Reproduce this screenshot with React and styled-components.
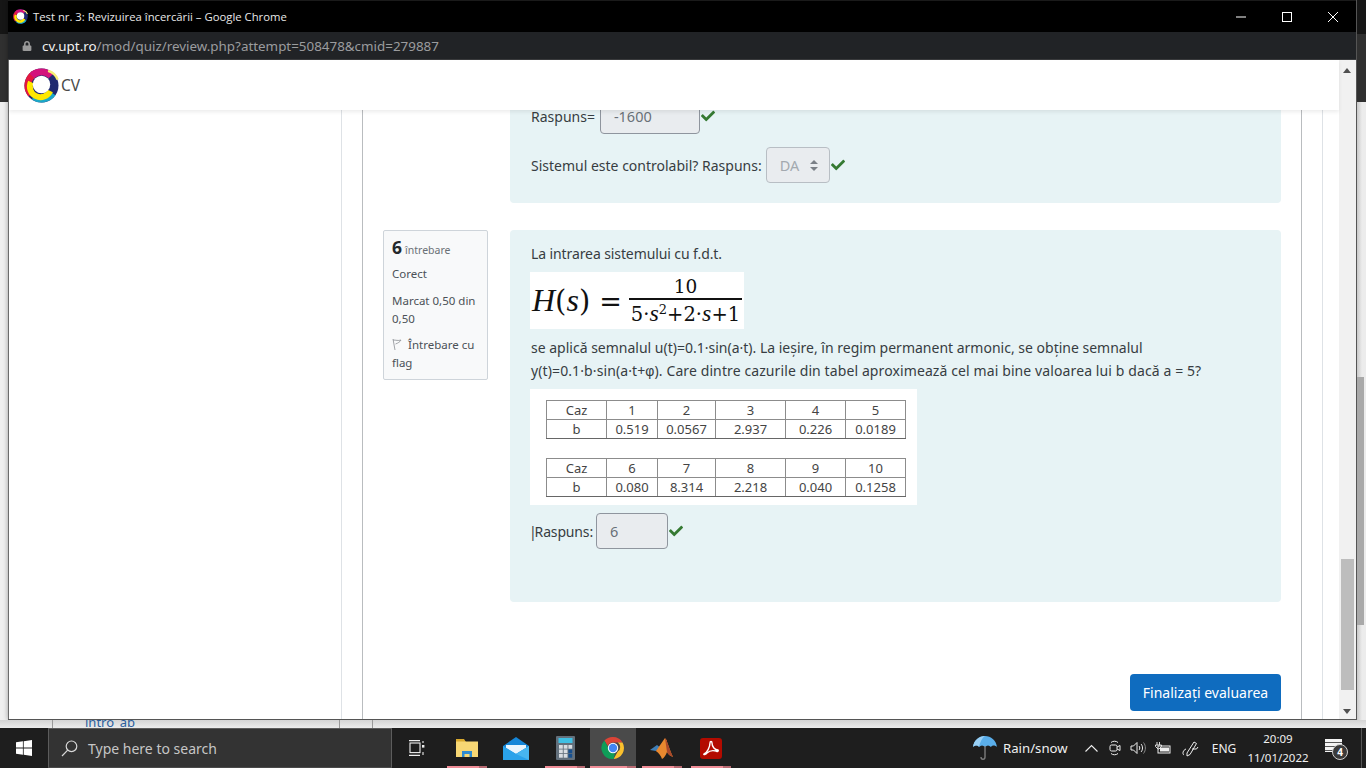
import React from 'react'
import styled, { createGlobalStyle } from 'styled-components'
import { FaCheck, FaLock } from 'react-icons/fa'

const uiFont = '"Noto Sans", "Open Sans", sans-serif'

const GlobalStyle = createGlobalStyle`
  html, body { margin: 0; padding: 0; overflow: hidden; background: #1f1f1f; }
  * { box-sizing: border-box; }
  body { font-family: ${uiFont}; }
`

const Screen = styled.div`
  width: 1366px;
  height: 768px;
  display: grid;
  grid-template-rows: 728px 40px;
  overflow: hidden;
`

const Desk = styled.div`
  display: grid;
  grid-template-columns: 8px 1349px 9px;
  grid-template-rows: 720px 8px;
  background: #ececec;
`

const Gutter = styled.div`
  display: grid;
  grid-template-rows: 34px 68px 1fr;
  background: #efefef;
  &::before { content: ''; background: #161616; }
  &::after { content: ''; background: #303030; grid-row: 2; }
`

const RightGutter = styled(Gutter)`
  position: relative;
  background: linear-gradient(90deg, #c9c9c9, #ececec 5px);
`

const BehindThumb = styled.div`
  position: absolute;
  left: 0;
  top: 377px;
  width: 7px;
  height: 248px;
  background: #a9a9a9;
`

const BehindStrip = styled.div`
  grid-column: 1 / 4;
  display: flex;
  height: 8px;
  overflow: hidden;
  padding-left: 52px;
  background: linear-gradient(180deg, #d4d4d4, #ececec);
`

const BehindPane = styled.div`
  flex: 0 0 ${p => p.$w}px;
  border-left: 1px solid #9a9a9a;
  padding-left: 32px;
  font-size: 13px;
  line-height: 4px;
  color: #2c5f9e;
`

const BehindEdge = styled.div`
  flex: 0 0 1px;
  background: #9a9a9a;
`

const ChromeWindow = styled.div`
  display: flex;
  flex-direction: column;
  height: 720px;
  overflow: hidden;
  background: #000;
  border-bottom: 1px solid #555;
  border-right: 1px solid #555;
  box-shadow: 0 0 5px rgba(0, 0, 0, 0.35);
`

const TitleBar = styled.div`
  display: flex;
  align-items: center;
  flex: 0 0 32px;
  border-top: 1px solid #1a1a1a;
  padding-left: 5px;
  background: #000;
  color: #e8e8e8;
  font-family: "Open Sans", sans-serif;
  font-size: 11.3px;
`

const TitleText = styled.span`
  margin-left: 5px;
  flex: 1;
`

const WinButton = styled.div`
  width: 46px;
  height: 30px;
  display: flex;
  align-items: center;
  justify-content: center;
  color: #fff;
`

const UrlBar = styled.div`
  display: flex;
  align-items: center;
  flex: 0 0 28px;
  padding-left: 14px;
  gap: 10px;
  background: #212326;
  color: #9b9c9e;
  font-size: 13.4px;
  border-bottom: 1px solid #3a3b3d;
`

const UrlHost = styled.span`
  color: #f2f2f2;
`

const Viewport = styled.div`
  position: relative;
  flex: 1;
  min-height: 0;
  display: grid;
  grid-template-columns: 1fr 17px;
  background: #fff;
  border-left: 1px solid #6b6b6b;
`

const SiteHeader = styled.header`
  position: absolute;
  z-index: 2;
  top: 0;
  left: 0;
  right: 17px;
  height: 50px;
  display: flex;
  align-items: center;
  gap: 2px;
  padding-left: 15px;
  background: #fff;
  box-shadow: 0 2px 4px rgba(0, 0, 0, 0.08);
  color: #4a4a4a;
  font-size: 15.5px;
`

const PageColumns = styled.div`
  display: grid;
  grid-template-columns: 333px 940px 1fr;
  column-gap: 20px;
  overflow: hidden;
`

const SideDrawer = styled.div`
  border-right: 1px solid #dee2e6;
`

const Region = styled.main`
  border-left: 1px solid #b9bcbf;
  border-right: 1px solid #b9bcbf;
  padding: 0 20px;
  display: flex;
  flex-direction: column;
`

const RightLine = styled.div`
  border-left: 1px solid #dee2e6;
`

const Question = styled.section`
  display: flex;
  gap: 22px;
  padding-left: ${p => (p.$noInfo ? '127px' : '0')};
  margin-bottom: 27px;
`

const InfoBox = styled.div`
  flex: 0 0 105px;
  align-self: flex-start;
  height: 150px;
  padding: 7px 8px 5px;
  background: #f8f9fa;
  border: 1px solid #ced4da;
  border-radius: 2px;
  color: #4b5157;
  font-size: 11.5px;
  line-height: 18px;
`

const QNo = styled.div`
  height: 25px;
  display: flex;
  align-items: baseline;
  gap: 3px;
  color: #6a7076;
  font-size: 10.5px;
  b {
    color: #23282c;
    font-size: 17.5px;
    font-weight: 700;
  }
`

const InfoLine = styled.div`
  margin-top: ${p => p.$top || 0}px;
`

const FlagSvg = styled.svg`
  width: 10px;
  height: 11px;
  margin-right: 3px;
  vertical-align: -1px;
`

const AnswerCard = styled.div`
  flex: 1;
  min-width: 0;
  height: ${p => p.$h}px;
  padding: ${p => p.$top}px 21px 0;
  background: #e7f3f5;
  border-radius: 4px;
  color: #373d42;
  font-size: 14px;
  line-height: 23px;
`

const Line = styled.div`
  display: flex;
  align-items: center;
  gap: ${p => p.$gap || 4}px;
  margin-top: ${p => p.$top || 0}px;
`

const Intro = styled.div`
  letter-spacing: -0.1px;
`

const WideLine = styled.span`
  letter-spacing: 0.105px;
`

const Phi = styled.span`
  font-family: "Liberation Sans", sans-serif;
`

const Caret = styled.span`
  margin: 0 -2px 0 -2px;
`

const TightLabel = styled.span`
  letter-spacing: -0.15px;
`

const Field = styled.div`
  display: flex;
  align-items: center;
  width: ${p => p.$w}px;
  height: 36px;
  padding-left: 13px;
  background: #e9ecef;
  border: 1px solid #8f959e;
  border-radius: 4px;
  color: #6a7178;
  font-size: 14.5px;
`

const SelectField = styled(Field)`
  border-color: #b8bec4;
  color: #a3a9af;
  justify-content: space-between;
  padding-right: 11px;
`

const Check = styled(FaCheck)`
  width: 14px;
  height: 14px;
  margin-left: ${p => p.$pull || -3}px;
  color: #357a32;
`

const Formula = styled.div`
  display: flex;
  align-items: center;
  width: 214px;
  height: 57px;
  margin: 7px 0 7px -1px;
  padding-left: 2px;
  background: #fff;
  color: #111;
  font-family: "DejaVu Serif", serif;
`

const FormulaLhs = styled.span`
  font-size: 29px;
  white-space: nowrap;
  width: 97px;
  i { font-family: "Liberation Serif", serif; font-size: 32px; }
`

const Equals = styled.span`
  margin-left: 9px;
  font-size: 27px;
`

const Fraction = styled.div`
  display: flex;
  flex-direction: column;
  width: 113px;
  font-size: 19.5px;
  line-height: 27px;
  text-align: center;
  white-space: nowrap;
  i { font-family: "Liberation Serif", serif; font-size: 24px; }
  sup { font-size: 13px; line-height: 0; }
`

const Numerator = styled.div`
  border-bottom: 2px solid #111;
  height: 27px;
  font-size: 18.5px;
`

const TableImage = styled.div`
  display: flex;
  flex-direction: column;
  gap: 19px;
  width: 387px;
  height: 116px;
  margin: 6px 0 8px -1px;
  padding: 11px 12px 0 16px;
  background: #fff;
`

const CaseTable = styled.table`
  width: 359px;
  table-layout: fixed;
  border-collapse: collapse;
  color: #444;
  font-size: 13px;
  td {
    height: 19px;
    padding: 0;
    text-align: center;
    line-height: 17px;
    border: 1px solid #8c8c8c;
  }
  tr + tr td {
    border-bottom-color: #666;
  }
`

const SubmitRow = styled.div`
  display: flex;
  justify-content: flex-end;
  margin-top: 45px;
`

const SubmitButton = styled.button`
  width: 151px;
  height: 37px;
  padding: 0;
  border: 0;
  border-radius: 4px;
  background: #0f6cbf;
  color: #fff;
  font-family: inherit;
  font-size: 14px;
`

const ScrollBar = styled.div`
  position: relative;
  background: #f1f1f1;
`

const ScrollThumb = styled.div`
  position: absolute;
  left: 2px;
  right: 2px;
  top: 499px;
  height: 131px;
  background: #bdbdbd;
`

const ScrollArrow = styled.div`
  position: absolute;
  left: 4px;
  top: ${p => p.$top}px;
  width: 0;
  height: 0;
  border-left: 4px solid transparent;
  border-right: 4px solid transparent;
  ${p => (p.$up ? 'border-bottom: 5px solid #505050;' : 'border-top: 5px solid #505050;')}
`

const TaskBar = styled.footer`
  display: flex;
  align-items: center;
  background: #1e1e1e;
  color: #f0f0f0;
`

const StartSlot = styled.div`
  flex: 0 0 48px;
  display: flex;
  justify-content: center;
`

const SearchBox = styled.div`
  flex: 0 0 344px;
  height: 40px;
  display: flex;
  align-items: center;
  gap: 10px;
  padding-left: 12px;
  background: #333;
  border: 1px solid #5c5c5c;
  border-bottom-color: #4a4a4a;
  color: #c6c6c6;
  font-size: 14px;
`

const AppSlot = styled.div`
  position: relative;
  flex: 0 0 ${p => p.$w || 49}px;
  height: 40px;
  display: flex;
  align-items: center;
  justify-content: center;
  background: ${p => (p.$active ? '#4a4a4a' : 'transparent')};
  ${p => p.$running && `
    &::after {
      content: '';
      position: absolute;
      left: ${p.$active ? '0' : 'calc(50% - 20px)'};
      width: ${p.$active ? '100%' : '40px'};
      bottom: 0;
      height: 2px;
      background: linear-gradient(90deg, #f08d97 80%, #b76a72 80%);
    }
  `}
`

const Tray = styled.div`
  display: flex;
  align-items: center;
  height: 40px;
  margin-left: auto;
  font-size: 12px;
`

const Weather = styled.div`
  display: flex;
  align-items: center;
  gap: 6px;
  width: 107px;
  font-size: 13.2px;
`

const TraySlot = styled.div`
  flex: 0 0 ${p => p.$w}px;
  display: flex;
  flex-direction: column;
  align-items: center;
  justify-content: center;
  line-height: 19px;
  font-size: ${p => p.$size || 12}px;
`

const Badge = styled.span`
  position: absolute;
  right: -6px;
  bottom: -8px;
  width: 16px;
  height: 16px;
  border-radius: 50%;
  background: #3a3a3a;
  border: 1px solid #d0d0d0;
  font-size: 10px;
  font-weight: 700;
  line-height: 14px;
  text-align: center;
  color: #fff;
`

const NoteWrap = styled.div`
  position: relative;
  width: 17px;
  height: 13px;
  margin-top: -5px;
  background: repeating-linear-gradient(180deg, #f4f4f4 0 3px, #555 3px 4px);
`

const Desktop = styled.div`
  flex: 0 0 5px;
  height: 40px;
  border-left: 1px solid #555;
`

function arc(cx, cy, r, a0, a1) {
  const rad = d => (d * Math.PI) / 180
  const x0 = cx + r * Math.cos(rad(a0))
  const y0 = cy + r * Math.sin(rad(a0))
  const x1 = cx + r * Math.cos(rad(a1))
  const y1 = cy + r * Math.sin(rad(a1))
  return `M${x0} ${y0}A${r} ${r} 0 ${a1 - a0 > 180 ? 1 : 0} 1 ${x1} ${y1}`
}

function CvLogo({ size = 35 }) {
  return (
    <svg width={size} height={size} viewBox="0 0 36 36">
      <circle cx="18" cy="18" r="17.5" fill="#1f2a70" />
      <path d={arc(18, 18, 14, 140, 250)} stroke="#e3173f" strokeWidth="7" fill="none" />
      <path d={arc(18, 18, 14, 225, 315)} stroke="#d3127c" strokeWidth="7" fill="none" />
      <path d={arc(21, 17, 14.5, 285, 340)} stroke="#f6ee74" strokeWidth="2.5" fill="none" />
      <path d={arc(18, 18, 15, 35, 125)} stroke="#1ba7c8" strokeWidth="5" fill="none" />
      <path d={arc(17, 19, 11, 25, 205)} stroke="#ffe800" strokeWidth="6" fill="none" />
      <circle cx="18" cy="17" r="9" fill="#fff" />
    </svg>
  )
}

function ChromeLogo({ size = 24 }) {
  return (
    <svg width={size} height={size} viewBox="0 0 24 24">
      <path d="M12 1a11 11 0 0 1 9.5 5.5H12a5.5 5.5 0 0 0-5.2 3.6L3.4 4.6A11 11 0 0 1 12 1z" fill="#db4437" />
      <path d="M21.5 6.5A11 11 0 0 1 12.6 23l4.2-7.4a5.5 5.5 0 0 0 0-9.1z" fill="#fbc02d" />
      <path d="M3.4 4.6l4.4 7.8a5 5 0 0 0 6.2 4.6l-1.4 6A11 11 0 0 1 3.4 4.6z" fill="#0f9d58" />
      <circle cx="12" cy="12" r="5.2" fill="#fff" />
      <circle cx="12" cy="12" r="4.2" fill="#4285f4" />
    </svg>
  )
}

function WindowsLogo() {
  return (
    <svg width="16" height="16" viewBox="0 0 16 16" fill="#fff">
      <path d="M0 2.3 6.9 1.3V7.6H0zM7.7 1.2 16 0V7.6H7.7zM0 8.4H6.9V14.7L0 13.7zM7.7 8.4H16V16L7.7 14.8z" />
    </svg>
  )
}

function SearchGlass() {
  return (
    <svg width="17" height="17" viewBox="0 0 17 17" fill="none" stroke="#d8d8d8" strokeWidth="1.2">
      <circle cx="10.5" cy="6.3" r="5.3" />
      <path d="M6.7 10.1 1 16" />
    </svg>
  )
}

function TaskViewIcon() {
  return (
    <svg width="16" height="16" viewBox="0 0 16 16" fill="none" stroke="#eee" strokeWidth="1.1">
      <path d="M0 .6h11M0 15.4h11" />
      <rect x="1" y="3" width="10" height="9.6" />
      <path d="M14 1v2M14 12v3" />
      <rect x="13" y="5" width="2.4" height="2.6" fill="#eee" stroke="none" />
    </svg>
  )
}

function FolderIcon() {
  return (
    <svg width="24" height="20" viewBox="0 0 24 20">
      <path d="M1 1h8l2 3H1z" fill="#d9a92e" />
      <rect x="1" y="3.5" width="22" height="15.5" fill="#f7d774" />
      <path d="M7 19v-6h10v6h-2.5v-3h-5v3z" fill="#2f8bd0" />
    </svg>
  )
}

function MailIcon() {
  return (
    <svg width="26" height="23" viewBox="0 0 26 23">
      <path d="M0 9 13 0l13 9v14H0z" fill="#1586d8" />
      <path d="M3 8h20v3l-10 6L3 11z" fill="#e9f5fd" />
      <path d="M0 9l13 8 13-8v14H0z" fill="#2aa2ea" />
      <path d="M13 17l13 6V9z" fill="#47b6f0" />
    </svg>
  )
}

function CalcIcon() {
  const keys = []
  for (let r = 0; r < 3; r++) {
    for (let c = 0; c < 3; c++) {
      const navy = c === 2 && r > 0
      keys.push(<rect key={`${r}${c}`} x={3 + c * 4.7} y={9 + r * 4.5} width="3.8" height="3.7" fill={navy ? '#17508f' : '#d8dde2'} />)
    }
  }
  return (
    <svg width="19" height="24" viewBox="0 0 19 24">
      <rect width="19" height="24" rx="1" fill="#63707c" />
      <rect x="2.5" y="2" width="14" height="5" fill="#3fc0e4" />
      {keys}
    </svg>
  )
}

function MatlabIcon() {
  return (
    <svg width="24" height="23" viewBox="0 0 24 23">
      <path d="M0 13 7 8l4 3-5 3z" fill="#3f7fb8" />
      <path d="M6 14l5-3 4-9 2 1-5 13z" fill="#c9562a" />
      <path d="M15 1c2 2 5 13 8 19-3-1-5-3-6-5-1 3-3 6-5 7-1-3-3-6-6-8z" fill="#e8882f" />
      <path d="M15 1c2 2 5 13 8 19-3-1-5-3-6-5z" fill="#a9482a" />
    </svg>
  )
}

function AcrobatIcon() {
  return (
    <svg width="22" height="21" viewBox="0 0 22 21">
      <rect width="22" height="21" rx="3" fill="#b30b00" />
      <path d="M4 16c3-1 6-7 6-11 0-2 2-2 2 0 0 4 3 7 6 7 1 1-1 2-2 1-4-1-7 0-9 2-1 2-4 2-3 1z" fill="none" stroke="#fff" strokeWidth="1.4" />
    </svg>
  )
}

function UmbrellaIcon() {
  return (
    <svg width="24" height="26" viewBox="0 0 24 26">
      <path d="M0 12C1 5 6 1 12 1s11 4 12 11c-2-2-5-2-6 0-2-2-4-2-6 0-2-2-4-2-6 0-1-2-4-2-6 0z" fill="#5aaeea" />
      <path d="M12 1c-3 2-5 6-6 11-1-2-4-2-6 0C1 5 6 1 12 1z" fill="#9ad0f5" />
      <path d="M12 11v11c0 3-4 3-4 0" fill="none" stroke="#7c7c7c" strokeWidth="1.4" />
    </svg>
  )
}

function ChevronUp() {
  return (
    <svg width="13" height="8" viewBox="0 0 13 8" fill="none" stroke="#eee" strokeWidth="1.1">
      <path d="M.5 7.5 6.5 1.5l6 6" />
    </svg>
  )
}

function MeetIcon() {
  return (
    <svg width="12" height="16" viewBox="0 0 12 16" fill="none" stroke="#eee" strokeWidth="1">
      <rect x="1" y="5" width="7" height="6" rx="1.5" />
      <path d="M8 7l3-1.5v5L8 9M2 2.5C4 .8 7 .8 9 2.5M2 13.5c2 1.7 5 1.7 7 0" />
    </svg>
  )
}

function SpeakerIcon() {
  return (
    <svg width="17" height="14" viewBox="0 0 17 14" fill="none" stroke="#eee" strokeWidth="1">
      <path d="M1 5h2.5L7 1.5v11L3.5 9H1z" />
      <path d="M9 5c1 1 1 3 0 4M11 3c2 2 2 6 0 8" />
      <path d="M13.5 1.5c2.5 3 2.5 8 0 11" stroke="#888" />
    </svg>
  )
}

function BatteryIcon() {
  return (
    <svg width="16" height="12" viewBox="0 0 16 12">
      <path d="M2 0v3M4.5 0v3M.5 3h6v1.5L4 7H3L.5 4.5z" fill="none" stroke="#eee" strokeWidth=".9" />
      <rect x="3" y="4" width="12" height="7" fill="none" stroke="#eee" />
      <rect x="5" y="5.5" width="9" height="4" fill="#eee" />
    </svg>
  )
}

function PenIcon() {
  return (
    <svg width="17" height="17" viewBox="0 0 17 17" fill="none" stroke="#eee" strokeWidth="1">
      <path d="M5 13 12 2l2.5 1.5L8 14.5 5 16zM10 9l4.5 0 1.5-2" />
      <path d="M4 9c-3 1-4 5-2 6" />
    </svg>
  )
}

const table1 = [['1', '2', '3', '4', '5'], ['0.519', '0.0567', '2.937', '0.226', '0.0189']]
const table2 = [['6', '7', '8', '9', '10'], ['0.080', '8.314', '2.218', '0.040', '0.1258']]
const colWidths = [60, 51, 58, 70, 60, 60]

function Cases({ rows }) {
  return (
    <CaseTable>
      <colgroup>
        {colWidths.map((w, i) => <col key={i} style={{ width: w }} />)}
      </colgroup>
      <tbody>
        <tr><td>Caz</td>{rows[0].map(v => <td key={v}>{v}</td>)}</tr>
        <tr><td>b</td>{rows[1].map(v => <td key={v}>{v}</td>)}</tr>
      </tbody>
    </CaseTable>
  )
}

export default function App() {
  return (
    <Screen>
      <GlobalStyle />
      <Desk>
        <Gutter />
        <ChromeWindow>
          <TitleBar>
            <CvLogo size={15} />
            <TitleText>Test nr. 3: Revizuirea încercării – Google Chrome</TitleText>
            <WinButton>
              <svg width="10" height="2"><path d="M0 1h10" stroke="#fff" /></svg>
            </WinButton>
            <WinButton>
              <svg width="10" height="10"><rect x=".5" y=".5" width="9" height="9" fill="none" stroke="#fff" /></svg>
            </WinButton>
            <WinButton>
              <svg width="10" height="10"><path d="M0 0l10 10M10 0 0 10" stroke="#fff" /></svg>
            </WinButton>
          </TitleBar>
          <UrlBar>
            <FaLock size={10} color="#9a9a9a" />
            <span><UrlHost>cv.upt.ro</UrlHost>/mod/quiz/review.php?attempt=508478&amp;cmid=279887</span>
          </UrlBar>
          <Viewport>
            <SiteHeader>
              <CvLogo />
              <span>CV</span>
            </SiteHeader>
            <PageColumns>
              <SideDrawer />
              <Region>
                <Question $noInfo>
                  <AnswerCard $h={143} $top={38}>
                    <Line $gap={5}>Raspuns= <Field $w={100}>-1600</Field><Check $pull={-4} /></Line>
                    <Line $top={13}>
                      Sistemul este controlabil? Raspuns:
                      <SelectField $w={64}>
                        DA
                        <svg width="8" height="11" viewBox="0 0 8 11" fill="#7a8087">
                          <path d="M4 0l4 4H0zM4 11 0 7h8z" />
                        </svg>
                      </SelectField>
                      <Check />
                    </Line>
                  </AnswerCard>
                </Question>
                <Question>
                  <InfoBox>
                    <QNo><b>6</b> întrebare</QNo>
                    <InfoLine $top={2}>Corect</InfoLine>
                    <InfoLine $top={9}>Marcat 0,50 din 0,50</InfoLine>
                    <InfoLine $top={8}>
                      <FlagSvg viewBox="0 0 10 11" fill="none" stroke="#8b8f94" strokeWidth=".8">
                        <path d="M1 0l2 11M1 1c3 0 5 1 8 0-1 2-3 3-5.5 4" />
                      </FlagSvg>
                      {' '}Întrebare cu flag
                    </InfoLine>
                  </InfoBox>
                  <AnswerCard $h={372} $top={12}>
                    <Intro>La intrarea sistemului cu f.d.t.</Intro>
                    <Formula>
                      <FormulaLhs><i>H</i>(<i>s</i>)<Equals>=</Equals></FormulaLhs>
                      <Fraction>
                        <Numerator>10</Numerator>
                        <div>5·<i>s</i><sup>2</sup>+2·<i>s</i>+1</div>
                      </Fraction>
                    </Formula>
                    <div>
                      se aplică semnalul u(t)=0.1·sin(a·t). La ieșire, în regim permanent armonic, se obține semnalul<br />
                      <WideLine>y(t)=0.1·b·sin(a·t+<Phi>φ</Phi>). Care dintre cazurile din tabel aproximează cel mai bine valoarea lui b dacă a = 5?</WideLine>
                    </div>
                    <TableImage>
                      <Cases rows={table1} />
                      <Cases rows={table2} />
                    </TableImage>
                    <Line $gap={3}><TightLabel><Caret>|</Caret>Raspuns:</TightLabel><Field $w={72}>6</Field><Check $pull={-2} /></Line>
                  </AnswerCard>
                </Question>
                <SubmitRow>
                  <SubmitButton>Finalizați evaluarea</SubmitButton>
                </SubmitRow>
              </Region>
              <RightLine />
            </PageColumns>
            <ScrollBar>
              <ScrollArrow $up $top={8} />
              <ScrollThumb />
              <ScrollArrow $top={649} />
            </ScrollBar>
          </Viewport>
        </ChromeWindow>
        <RightGutter><BehindThumb /></RightGutter>
        <BehindStrip>
          <BehindPane $w={287}>intro_ab</BehindPane>
          <BehindPane $w={16} />
          <BehindEdge />
        </BehindStrip>
      </Desk>
      <TaskBar>
        <StartSlot><WindowsLogo /></StartSlot>
        <SearchBox><SearchGlass />Type here to search</SearchBox>
        <AppSlot $w={50}><TaskViewIcon /></AppSlot>
        <AppSlot $running><FolderIcon /></AppSlot>
        <AppSlot><MailIcon /></AppSlot>
        <AppSlot $running $w={50}><CalcIcon /></AppSlot>
        <AppSlot $running $active $w={46}><ChromeLogo /></AppSlot>
        <AppSlot $running $w={52}><MatlabIcon /></AppSlot>
        <AppSlot $running $w={46}><AcrobatIcon /></AppSlot>
        <Tray>
          <Weather><UmbrellaIcon />Rain/snow</Weather>
          <TraySlot $w={23}><ChevronUp /></TraySlot>
          <TraySlot $w={24}><MeetIcon /></TraySlot>
          <TraySlot $w={23}><SpeakerIcon /></TraySlot>
          <TraySlot $w={25}><BatteryIcon /></TraySlot>
          <TraySlot $w={30}><PenIcon /></TraySlot>
          <TraySlot $w={38}>ENG</TraySlot>
          <TraySlot $w={70} $size={11.5}><span>20:09</span><span>11/01/2022</span></TraySlot>
          <TraySlot $w={41}><NoteWrap><Badge>4</Badge></NoteWrap></TraySlot>
          <TraySlot $w={7} />
          <Desktop />
        </Tray>
      </TaskBar>
    </Screen>
  )
}
